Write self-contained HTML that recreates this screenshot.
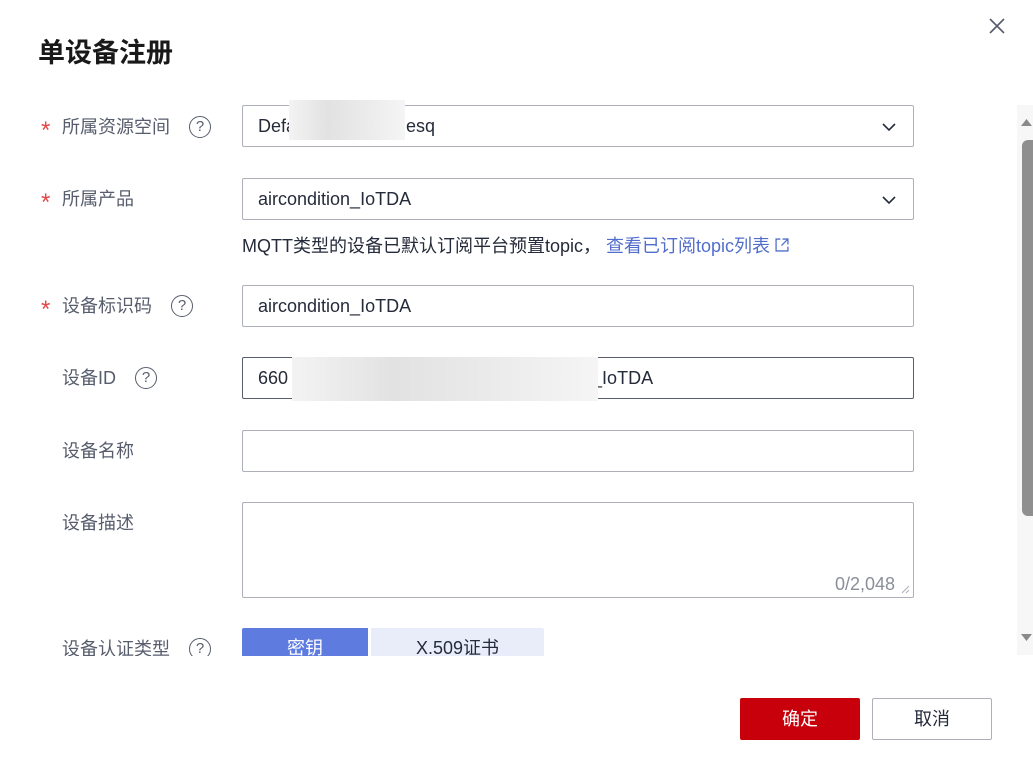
<!DOCTYPE html>
<html><head><meta charset="utf-8"><style>
*{box-sizing:border-box;margin:0;padding:0}
body{width:1033px;height:773px;background:#fff;font-family:"Liberation Sans","Noto Sans CJK SC",sans-serif;color:#252b3a;position:relative;overflow:hidden}
.abs{position:absolute}
.title{left:38px;top:31px;font-size:27px;font-weight:bold;color:#191919}
.close{left:988px;top:17px}
.clip{left:0;top:100px;width:1010px;height:556px;overflow:hidden}
.lbl{position:absolute;left:62px;font-size:18px;color:#575d6c;line-height:22px}
.star{position:absolute;left:41px;color:#e54545;font-size:24px;line-height:22px;top:0}
.q{position:absolute;width:22px;height:22px;border:1.3px solid #575d6c;border-radius:50%;font-size:15px;text-align:center;line-height:20px;color:#575d6c}
.inp{position:absolute;left:242px;width:672px;height:42px;border:1px solid #adb0b8;border-radius:2px;font-size:18px;padding:0 15px;line-height:40px;color:#252b3a}
.chev{position:absolute;right:16px;top:13px}
.blur{position:absolute;background:linear-gradient(90deg,#f3f3f3,#e2e2e2,#ebebeb,#f5f5f5)}
</style></head><body>
<div class="abs title">单设备注册</div>
<svg class="abs close" width="18" height="18" viewBox="0 0 18 18"><path d="M2 2L16 16M16 2L2 16" stroke="#575d6c" stroke-width="1.6"/></svg>
<div class="abs clip">
 <span class="star" style="top:20px">*</span><span class="lbl" style="top:16px">所属资源空间</span><span class="q" style="left:189px;top:16px">?</span>
 <div class="inp" style="top:5px">Defa<span style="margin-left:110px">esq</span><svg class="chev" width="16" height="16"><path d="M2 5L8 11L14 5" stroke="#252b3a" stroke-width="1.6" fill="none"/></svg></div>
 <div class="blur" style="left:289px;top:-3px;width:116px;height:43px"></div>
 <span class="star" style="top:92px">*</span><span class="lbl" style="top:88px">所属产品</span>
 <div class="inp" style="top:78px">aircondition_IoTDA<svg class="chev" width="16" height="16"><path d="M2 5L8 11L14 5" stroke="#252b3a" stroke-width="1.6" fill="none"/></svg></div>
 <div class="abs" style="left:242px;top:132px;font-size:18px;color:#252b3a;white-space:nowrap">MQTT类型的设备已默认订阅平台预置topic，<span style="color:#526ecc;margin-left:5px">查看已订阅topic列表</span> <svg width="14" height="14" viewBox="0 0 13 13" style="vertical-align:0"><path d="M5 1H1V12H12V8M7 1H12V6M12 1L6 7" stroke="#526ecc" stroke-width="1.2" fill="none"/></svg></div>
 <span class="star" style="top:199px">*</span><span class="lbl" style="top:195px">设备标识码</span><span class="q" style="left:171px;top:195px">?</span>
 <div class="inp" style="top:185px">aircondition_IoTDA</div>
 <span class="lbl" style="top:267px">设备ID</span><span class="q" style="left:135px;top:267px">?</span>
 <div class="inp" style="top:257px;border-color:#575d6c">660<span style="margin-left:304px">_IoTDA</span></div>
 <div class="blur" style="left:292px;top:257px;width:306px;height:44px"></div>
 <span class="lbl" style="top:340px">设备名称</span>
 <div class="inp" style="top:330px"></div>
 <span class="lbl" style="top:412px">设备描述</span>
 <div class="inp" style="top:402px;height:96px"><span style="position:absolute;right:18px;bottom:2px;line-height:22px;color:#8a8e99">0/2,048</span><svg style="position:absolute;right:3px;bottom:3px" width="9" height="9"><path d="M1 8L8 1M5 8L8 5" stroke="#adb0b8"/></svg></div>
 <span class="lbl" style="top:538px">设备认证类型</span><span class="q" style="left:189px;top:538px">?</span>
 <div class="abs" style="left:242px;top:528px;width:126px;height:40px;background:#5e7ce0;color:#fff;font-size:18px;text-align:center;line-height:40px;border-radius:2px 0 0 2px">密钥</div>
 <div class="abs" style="left:371px;top:528px;width:173px;height:40px;background:#e9edfa;color:#252b3a;font-size:18px;text-align:center;line-height:40px;border-radius:0 2px 2px 0">X.509证书</div>
</div>
<div class="abs" style="left:1017px;top:105px;width:16px;height:550px;background:#f7f7f7"></div>
<svg class="abs" style="left:1020px;top:117px" width="13" height="10"><path d="M1 9L6.5 2L12 9Z" fill="#8a8a8a"/></svg>
<div class="abs" style="left:1022px;top:140px;width:11px;height:376px;background:#8f8f8f;border-radius:6px 0 0 6px"></div>
<svg class="abs" style="left:1020px;top:633px" width="13" height="10"><path d="M1 1L6.5 8L12 1Z" fill="#8a8a8a"/></svg>
<div class="abs" style="left:740px;top:698px;width:120px;height:42px;background:#c7000b;color:#fff;font-size:18px;text-align:center;line-height:42px;border-radius:2px">确定</div>
<div class="abs" style="left:872px;top:698px;width:120px;height:42px;border:1px solid #adb0b8;color:#252b3a;font-size:18px;text-align:center;line-height:40px;border-radius:2px">取消</div>
</body></html>
